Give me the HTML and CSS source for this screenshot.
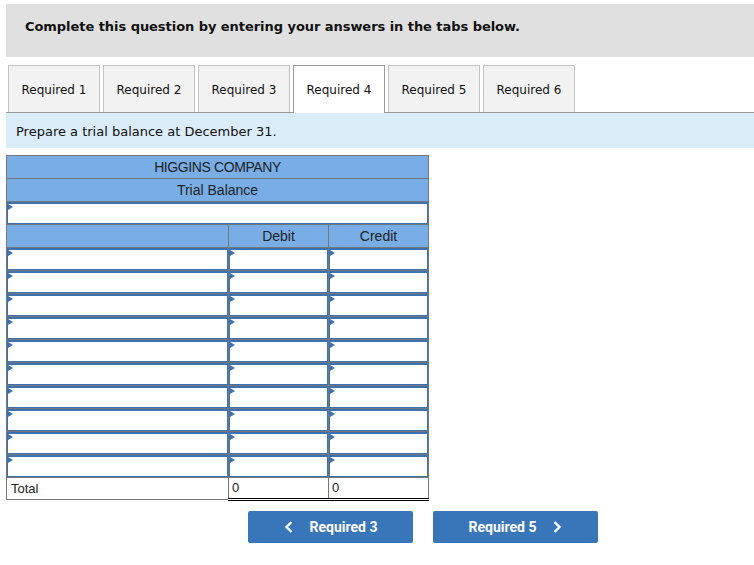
FILE: index.html
```html
<!DOCTYPE html>
<html>
<head>
<meta charset="utf-8">
<link rel="stylesheet" href="styles.css">
</head>
<body>
<div class="page">
  <div class="instr">Complete this question by entering your answers in the tabs below.</div>
  <div class="tabs">
    <div class="tab">Required 1</div>
    <div class="tab">Required 2</div>
    <div class="tab">Required 3</div>
    <div class="tab active">Required 4</div>
    <div class="tab">Required 5</div>
    <div class="tab">Required 6</div>
  </div>
  <div class="band">Prepare a trial balance at December 31.</div>
  <table class="tb">
    <colgroup><col class="c1"><col class="c2"><col class="c3"></colgroup>
    <tr class="hd"><td colspan="3" class="co">HIGGINS COMPANY</td></tr>
    <tr class="hd"><td colspan="3">Trial Balance</td></tr>
    <tr><td colspan="3" class="in"><div class="box"></div></td></tr>
    <tr class="hd"><td></td><td>Debit</td><td>Credit</td></tr>
    <tr><td class="in"><div class="box"></div></td><td class="in"><div class="box"></div></td><td class="in"><div class="box"></div></td></tr>
    <tr><td class="in"><div class="box"></div></td><td class="in"><div class="box"></div></td><td class="in"><div class="box"></div></td></tr>
    <tr><td class="in"><div class="box"></div></td><td class="in"><div class="box"></div></td><td class="in"><div class="box"></div></td></tr>
    <tr><td class="in"><div class="box"></div></td><td class="in"><div class="box"></div></td><td class="in"><div class="box"></div></td></tr>
    <tr><td class="in"><div class="box"></div></td><td class="in"><div class="box"></div></td><td class="in"><div class="box"></div></td></tr>
    <tr><td class="in"><div class="box"></div></td><td class="in"><div class="box"></div></td><td class="in"><div class="box"></div></td></tr>
    <tr><td class="in"><div class="box"></div></td><td class="in"><div class="box"></div></td><td class="in"><div class="box"></div></td></tr>
    <tr><td class="in"><div class="box"></div></td><td class="in"><div class="box"></div></td><td class="in"><div class="box"></div></td></tr>
    <tr><td class="in"><div class="box"></div></td><td class="in"><div class="box"></div></td><td class="in"><div class="box"></div></td></tr>
    <tr><td class="in"><div class="box"></div></td><td class="in"><div class="box"></div></td><td class="in"><div class="box"></div></td></tr>
    <tr class="total"><td class="lbl">Total</td><td class="num">0</td><td class="num">0</td></tr>
  </table>
  <div class="nav">
    <button class="btn"><svg class="chev" width="10" height="14" viewBox="0 0 10 14"><polyline points="7.5,2 2.5,7 7.5,12" fill="none" stroke="#fff" stroke-width="2.4"/></svg><span>Required 3</span></button>
    <button class="btn"><span>Required 5</span><svg class="chev" width="10" height="14" viewBox="0 0 10 14"><polyline points="2.5,2 7.5,7 2.5,12" fill="none" stroke="#fff" stroke-width="2.4"/></svg></button>
  </div>
</div>
</body>
</html>
```
FILE: styles.css
```css
html, body { margin: 0; padding: 0; background: #fff; }
.page { padding: 4px 0 0 6px; font-family: "DejaVu Sans", Verdana, sans-serif; }
.instr {
  background: #e0e0e0;
  height: 53px;
  box-sizing: border-box;
  padding: 15px 0 0 19px;
  font-weight: bold;
  font-size: 13px;
  letter-spacing: -0.05px;
  color: #111;
}
.tabs {
  display: flex;
  gap: 3px;
  margin-top: 8px;
  padding-left: 2px;
  border-bottom: 1px solid #999;
  height: 47px;
}
.tab {
  width: 92px;
  box-sizing: border-box;
  height: 47px;
  border: 1px solid #c4c4c4;
  border-bottom: none;
  background: #f2f2f2;
  font-size: 12px;
  color: #111;
  display: flex;
  align-items: center;
  justify-content: center;
  padding-top: 1px;
}
.tab.active {
  background: #fff;
  border-color: #999;
  height: 48px;
}
.band {
  background: #dbecf9;
  height: 35px;
  box-sizing: border-box;
  padding: 11px 0 0 10px;
  font-size: 13px;
  color: #111;
}
.tb {
  margin-top: 7px;
  border-collapse: collapse;
  table-layout: fixed;
  width: 423px;
  font-family: "Liberation Sans", Arial, sans-serif;
  font-size: 14px;
  line-height: 16px;
  color: #222;
}
.c1 { width: 222px; }
.c2 { width: 100px; }
.c3 { width: 100px; }
.tb td {
  border: 1px solid #777;
  height: 22px;
  padding: 0;
  box-sizing: content-box;
}
.tb tr.hd td {
  background: #78ade6;
  text-align: center;
  vertical-align: middle;
}
.tb td.co { letter-spacing: -0.4px; }
.tb td.in { background: #fff; vertical-align: top; }
.box {
  height: 22px;
  box-sizing: border-box;
  border: 1px solid #3b72b4;
  border-top-width: 2px;
  position: relative;
}
.box::before {
  content: "";
  position: absolute;
  left: 0;
  top: 0;
  border-left: 5px solid #3b72b4;
  border-top: 3px solid transparent;
  border-bottom: 3px solid transparent;
}
.total td { height: 20px; }
.total td.lbl { padding-left: 4px; font-size: 13px; }
.total td.num {
  padding-left: 3px;
  font-size: 13px;
  border-top: 1px solid #000;
  border-bottom: 3px double #000;
}
.nav {
  display: flex;
  gap: 20px;
  margin-top: 10px;
  padding-left: 242px;
}
.btn {
  width: 165px;
  height: 32px;
  background: #3975b9;
  border: none;
  border-radius: 2px;
  color: #fff;
  font-family: Roboto, "Liberation Sans", sans-serif;
  font-weight: bold;
  font-size: 14px;
  display: flex;
  align-items: center;
  justify-content: center;
  gap: 16px;
  padding: 0;
}
.chev { display: block; }
```
